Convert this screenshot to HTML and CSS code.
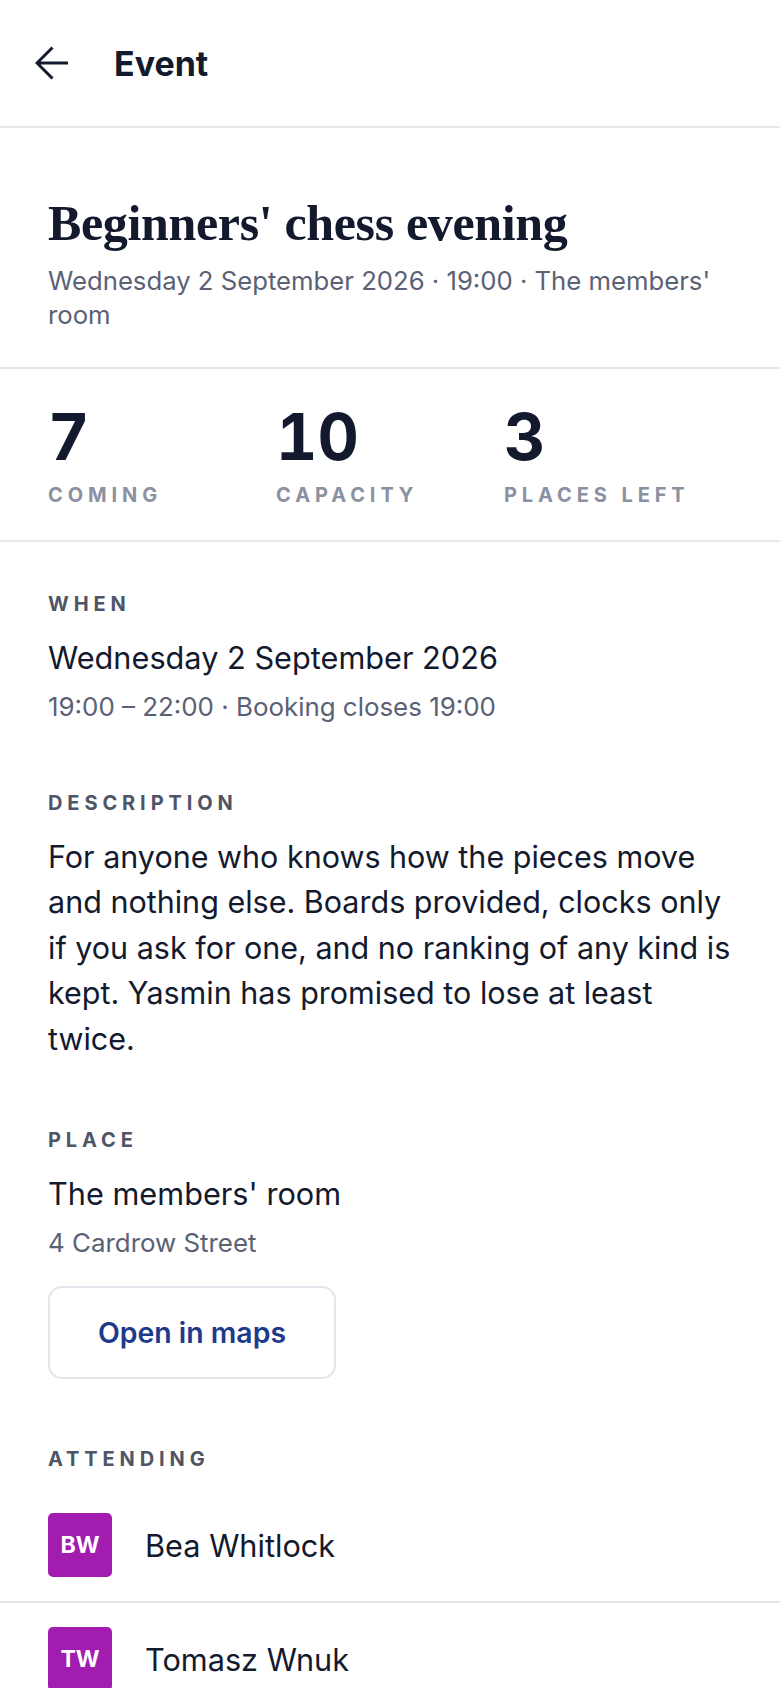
FILE: index.html
```html
<!DOCTYPE html>
<html lang="en">
<head>
    <meta charset="UTF-8">
    <meta name="viewport" content="width=device-width, initial-scale=1.0">
    <title>Event</title>
    <link rel="stylesheet" href="styles.css">
</head>
<body>
    <header class="topbar">
        <button class="back" aria-label="Back">
            <svg width="34" height="34" viewBox="0 0 34 34">
                <path d="M2 17 H33 M17.5 1.5 L2 17 L17.5 32.5" fill="none" stroke="#131a2e" stroke-width="3"/>
            </svg>
        </button>
        <h1 class="topbar-title">Event</h1>
    </header>

    <main>
        <section class="intro">
            <h2 class="event-title">Beginners' chess evening</h2>
            <p class="event-meta">Wednesday 2 September 2026 · 19:00 · The members' room</p>
        </section>

        <section class="stats">
            <div class="stat">
                <div class="stat-value">7</div>
                <div class="stat-label">Coming</div>
            </div>
            <div class="stat">
                <div class="stat-value">10</div>
                <div class="stat-label">Capacity</div>
            </div>
            <div class="stat">
                <div class="stat-value">3</div>
                <div class="stat-label">Places left</div>
            </div>
        </section>

        <div class="details">
            <section class="block">
                <h3 class="block-label">When</h3>
                <p class="block-main">Wednesday 2 September 2026</p>
                <p class="block-sub">19:00 – 22:00 · Booking closes 19:00</p>
            </section>

            <section class="block">
                <h3 class="block-label">Description</h3>
                <p class="description">For anyone who knows how the pieces move and nothing else. Boards provided, clocks only if you ask for one, and no ranking of any kind is kept. Yasmin has promised to lose at least twice.</p>
            </section>

            <section class="block">
                <h3 class="block-label">Place</h3>
                <p class="block-main">The members' room</p>
                <p class="block-sub">4 Cardrow Street</p>
                <button class="map-btn">Open in maps</button>
            </section>
        </div>

        <section class="attending">
            <h3 class="block-label">Attending</h3>
            <ul class="people">
                <li class="person">
                    <span class="avatar">BW</span>
                    <span class="person-name">Bea Whitlock</span>
                </li>
                <li class="person">
                    <span class="avatar">TW</span>
                    <span class="person-name">Tomasz Wnuk</span>
                </li>
            </ul>
        </section>
    </main>
</body>
</html>
```

FILE: styles.css
```css
body {
    margin: 0;
    font-family: Inter, "Noto Sans", sans-serif;
    color: #131a2e;
    background-color: #fff;
}

.topbar {
    display: flex;
    align-items: center;
    gap: 45px;
    height: 126px;
    padding-left: 35px;
    border-bottom: 2px solid #e5e7eb;
}

.back {
    display: flex;
    padding: 0;
    border: 0;
    background: none;
    cursor: pointer;
}

.topbar-title {
    margin: 0;
    font-size: 34px;
    font-weight: 700;
}

.intro {
    padding: 65px 48px 35px;
    border-bottom: 2px solid #e5e7eb;
}

.event-title {
    margin: 0;
    font-family: "Liberation Serif", serif;
    font-size: 50px;
    line-height: 60px;
    font-weight: 700;
    letter-spacing: -0.35px;
}

.event-meta {
    margin: 11px 0 0;
    font-size: 25.7px;
    line-height: 34px;
    color: #5a6174;
}

.stats {
    display: grid;
    grid-template-columns: repeat(3, 1fr);
    padding: 36px 48px 33px;
    border-bottom: 2px solid #e5e7eb;
}

.stat-value {
    font-size: 64px;
    line-height: 64px;
    font-weight: 700;
    font-variant-numeric: tabular-nums;
}

.stat-label {
    margin-top: 14px;
    font-size: 20px;
    line-height: 24px;
    font-weight: 700;
    letter-spacing: 0.245em;
    text-transform: uppercase;
    color: #8b91a1;
}

.details {
    display: flex;
    flex-direction: column;
    gap: 67px;
    padding: 50px 48px 0;
}

.block-label {
    margin: 0 0 19px;
    font-size: 20px;
    line-height: 24px;
    font-weight: 700;
    letter-spacing: 0.245em;
    text-transform: uppercase;
    color: #4e5567;
}

.block-main {
    margin: 0;
    font-size: 30.7px;
    line-height: 45px;
}

.block-sub {
    margin: 10px 0 0;
    font-size: 25.9px;
    line-height: 34px;
    color: #5a6174;
}

.description {
    margin: 0;
    font-size: 30.5px;
    line-height: 45.4px;
}

.map-btn {
    box-sizing: border-box;
    height: 93px;
    margin-top: 26px;
    padding: 0 48px;
    border: 2px solid #e2e5ec;
    border-radius: 14px;
    background: #fff;
    font-family: Inter, sans-serif;
    font-size: 28.4px;
    font-weight: 600;
    color: #1e3a8a;
    cursor: pointer;
}

.attending {
    margin-top: 68px;
}

.attending .block-label {
    margin: 0 0 18px;
    padding: 0 48px;
}

.people {
    list-style: none;
    margin: 0;
    padding: 0;
}

.person {
    display: flex;
    align-items: center;
    gap: 33px;
    padding: 24px 48px;
    border-bottom: 2px solid #e5e7eb;
}

.avatar {
    display: flex;
    align-items: center;
    justify-content: center;
    width: 64px;
    height: 64px;
    border-radius: 5px;
    background-color: #a21caf;
    color: #fff;
    font-size: 23px;
    font-weight: 700;
}

.person-name {
    font-size: 30.7px;
}
```
